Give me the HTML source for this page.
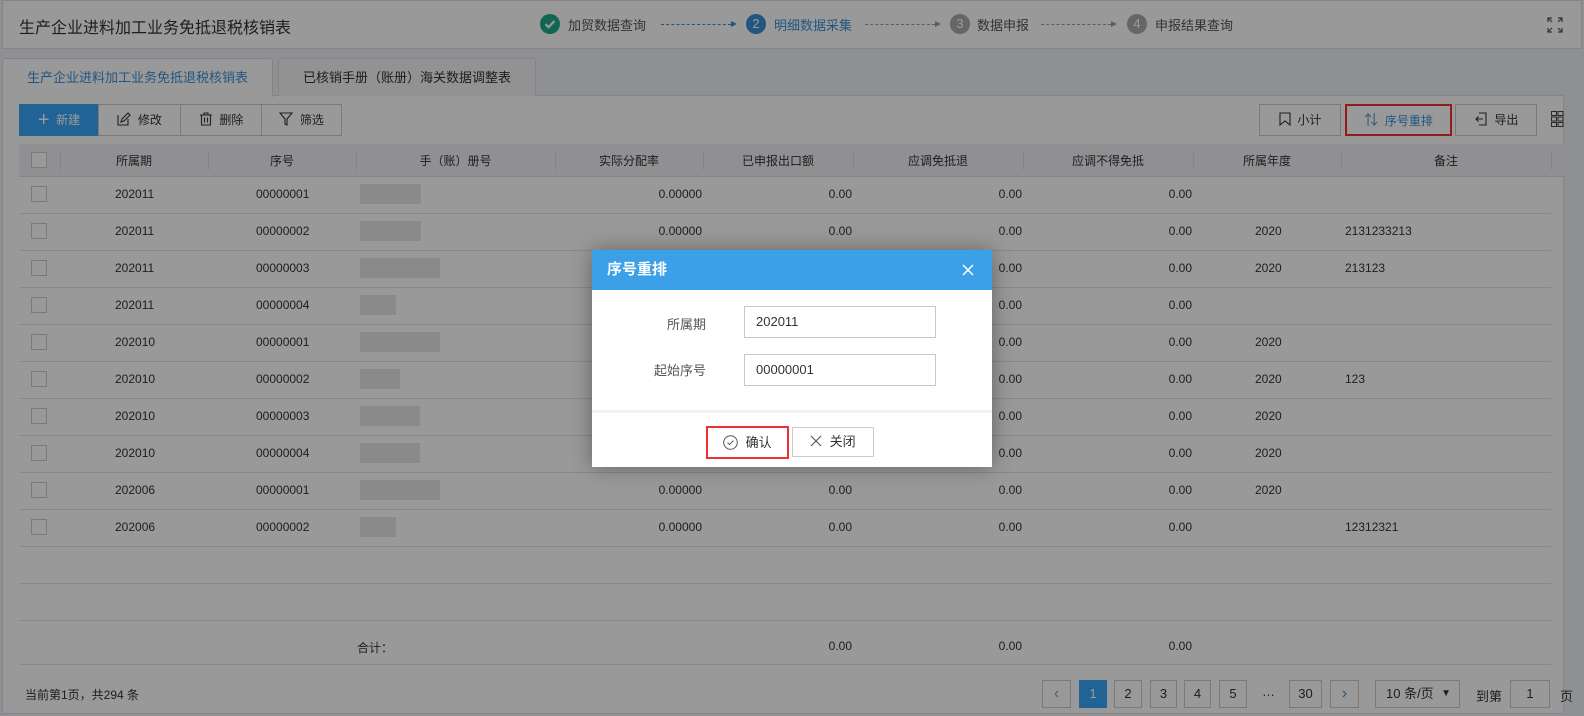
<!DOCTYPE html>
<html><head><meta charset="utf-8">
<style>
*{box-sizing:border-box;margin:0;padding:0}
body{width:1584px;height:716px;overflow:hidden;background:#eef0f6;font-family:"Liberation Sans","Noto Sans CJK SC",sans-serif;font-size:12px;color:#333;position:relative}
.abs{position:absolute}
.hdr{left:2px;top:0;width:1580px;height:49px;background:#fff;border:1px solid #ddd}
.title{left:19px;top:14px;font-size:16px;color:#333}
.step{top:15px;font-size:13px;color:#555}
.circ{top:14px;width:20px;height:20px;border-radius:50%;color:#fff;font-size:13px;text-align:center;line-height:20px}
.arrow{top:24px;height:0;border-top:1px dashed #3a8fd8}
.arrow::after{content:"";position:absolute;right:-6px;top:-4px;border-left:6px solid #3a8fd8;border-top:3.5px solid transparent;border-bottom:3.5px solid transparent}
.arrow.g{border-color:#999}.arrow.g::after{border-left-color:#999}
.tab{top:58px;height:38px;border:1px solid #ddd;border-bottom:none;border-radius:3px 3px 0 0;font-size:13px;line-height:38px;text-align:center;background:#f4f4f4;color:#333}
.panel{left:2px;top:95px;width:1562px;height:619px;background:#fff;border:1px solid #ddd}
.btn{top:104px;height:32px;border:1px solid #ccc;background:#fff;font-size:12px;line-height:30px;text-align:center;color:#333}
.th{top:144px;height:33px;background:#f0f1f5;left:19px;width:1545px;border-bottom:1px solid #ddd}
.sep{top:151px;width:1px;height:19px;background:#dcdcdc}
.hc{top:152px;font-size:12px;color:#333;text-align:center}
.row{left:19px;width:1532px;height:1px;background:#e4e4e4}
.cb{width:16px;height:16px;border:1px solid #ccc;background:#fff;left:31px}
.t{font-size:12px;color:#333;white-space:nowrap}
.r{text-align:right;width:80px}
.blur{left:360px;height:20px;background:#e6e6e6}
.pg{top:680px;height:28px;border:1px solid #ccc;background:#fff;text-align:center;line-height:26px;font-size:13px;color:#333}
.ov{left:0;top:0;width:1584px;height:716px;background:rgba(0,0,0,0.4)}
.modal{left:592px;top:250px;width:400px;height:217px;background:#fff;box-shadow:0 0 20px rgba(0,0,0,.35)}
.mh{left:0;top:0;width:400px;height:40px;background:#3ba0e8;color:#fff;font-size:15px;font-weight:bold;line-height:40px;padding-left:15px}
.inp{width:192px;height:32px;border:1px solid #c8c8c8;font-size:13px;line-height:30px;padding-left:11px;color:#333}
.lab{font-size:13px;color:#555;text-align:right;width:100px}
</style></head><body>
<div class="abs hdr"></div>
<div class="abs title">生产企业进料加工业务免抵退税核销表</div>
<div class="abs circ" style="left:540px;background:#1ea88a"><svg width="20" height="20" viewBox="0 0 20 20"><path d="M5.5 10.2l3 3 6-6.2" stroke="#fff" stroke-width="2.2" fill="none"/></svg></div>
<div class="abs step" style="left:568px">加贸数据查询</div>
<div class="abs arrow" style="left:661px;width:70px"></div>
<div class="abs circ" style="left:746px;background:#3a8fd8">2</div>
<div class="abs step" style="left:774px;color:#3a8fd8">明细数据采集</div>
<div class="abs arrow g" style="left:865px;width:70px"></div>
<div class="abs circ" style="left:950px;background:#aaa">3</div>
<div class="abs step" style="left:977px">数据申报</div>
<div class="abs arrow g" style="left:1041px;width:70px"></div>
<div class="abs circ" style="left:1127px;background:#aaa">4</div>
<div class="abs step" style="left:1155px">申报结果查询</div>
<svg class="abs" style="left:1547px;top:17px" width="16" height="16" viewBox="0 0 16 16" fill="none" stroke="#555" stroke-width="1.2"><path d="M1 5V1h4M1 1l4 4M11 1h4v4M15 1l-4 4M1 11v4h4M1 15l4-4M15 11v4h-4M15 15l-4-4"/></svg>

<div class="abs panel"></div>
<div class="abs tab" style="left:2px;width:271px;background:#fff;color:#3a8fd8;height:39px">生产企业进料加工业务免抵退税核销表</div>
<div class="abs tab" style="left:278px;width:258px">已核销手册（账册）海关数据调整表</div>

<div class="abs btn" style="left:19px;width:80px;background:#3aa6f8;border-color:#3aa6f8;color:#fff"><span style="font-size:20px;vertical-align:-2px;font-weight:300">+</span>&nbsp;&nbsp;新建</div>
<div class="abs btn" style="left:98px;width:83px"><svg width="14" height="14" viewBox="0 0 14 14" style="vertical-align:-2px" fill="none" stroke="#333" stroke-width="1.1"><path d="M1 3v10h10V7M4 10l1-3 6-6 2 2-6 6z"/></svg>&nbsp;&nbsp;修改</div>
<div class="abs btn" style="left:180px;width:82px"><svg width="14" height="14" viewBox="0 0 14 14" style="vertical-align:-2px" fill="none" stroke="#333" stroke-width="1.1"><path d="M1 3h12M5 3V1h4v2M2.5 3v10h9V3M5.5 5.5v5M8.5 5.5v5"/></svg>&nbsp;&nbsp;删除</div>
<div class="abs btn" style="left:261px;width:81px"><svg width="14" height="14" viewBox="0 0 14 14" style="vertical-align:-2px" fill="none" stroke="#333" stroke-width="1.1"><path d="M1 1h12L8 7v6L6 12V7z"/></svg>&nbsp;&nbsp;筛选</div>

<div class="abs btn" style="left:1259px;width:82px"><svg width="12" height="14" viewBox="0 0 12 14" style="vertical-align:-2px" fill="none" stroke="#333" stroke-width="1.1"><path d="M1 1h10v12L6 9 1 13z"/></svg>&nbsp;&nbsp;小计</div>
<div class="abs btn" style="left:1345px;width:107px;border:2px solid #f0302f;color:#3a8fd8;line-height:28px"><span style="font-size:14px">⇅</span>&nbsp;&nbsp;序号重排</div>
<div class="abs btn" style="left:1455px;width:82px"><svg width="14" height="14" viewBox="0 0 14 14" style="vertical-align:-2px" fill="none" stroke="#333" stroke-width="1.1"><path d="M5 1h7v12H5M2 7h7M4.5 4.5L2 7l2.5 2.5"/></svg>&nbsp;&nbsp;导出</div>
<svg class="abs" style="left:1551px;top:111px" width="13" height="16" viewBox="0 0 13 16" fill="none" stroke="#444"><rect x="0.5" y="0.5" width="5" height="4"/><rect x="7" y="0.5" width="5" height="4"/><rect x="0.5" y="6" width="5" height="4"/><rect x="7" y="6" width="5" height="4"/><rect x="0.5" y="11.5" width="5" height="4"/><rect x="7" y="11.5" width="5" height="4"/></svg>

<div class="abs th"></div>
<div class="abs cb" style="top:152px"></div>
<div class="abs sep" style="left:60px"></div><div class="abs sep" style="left:208px"></div><div class="abs sep" style="left:356px"></div><div class="abs sep" style="left:555px"></div><div class="abs sep" style="left:703px"></div><div class="abs sep" style="left:853px"></div><div class="abs sep" style="left:1023px"></div><div class="abs sep" style="left:1193px"></div><div class="abs sep" style="left:1341px"></div><div class="abs sep" style="left:1551px"></div>
<div class="abs hc" style="left:60px;width:148px">所属期</div>
<div class="abs hc" style="left:208px;width:148px">序号</div>
<div class="abs hc" style="left:356px;width:199px">手（账）册号</div>
<div class="abs hc" style="left:555px;width:148px">实际分配率</div>
<div class="abs hc" style="left:703px;width:150px">已申报出口额</div>
<div class="abs hc" style="left:853px;width:170px">应调免抵退</div>
<div class="abs hc" style="left:1023px;width:170px">应调不得免抵</div>
<div class="abs hc" style="left:1193px;width:148px">所属年度</div>
<div class="abs hc" style="left:1341px;width:210px">备注</div>

<div id="rows"></div>
<script>
var d=[["202011","00000001","",""],["202011","00000002","2020","2131233213"],["202011","00000003","2020","213123"],["202011","00000004","",""],["202010","00000001","2020",""],["202010","00000002","2020","123"],["202010","00000003","2020",""],["202010","00000004","2020",""],["202006","00000001","2020",""],["202006","00000002","","12312321"]];
var bw=[61,61,80,36,80,40,60,60,80,36];
var h="";
for(var i=0;i<10;i++){var y=176+i*37,ty=y+11;
h+='<div class="abs row" style="top:'+(y+37)+'px"></div>';
h+='<div class="abs cb" style="top:'+(y+10)+'px"></div>';
h+='<div class="abs t" style="left:115px;top:'+ty+'px">'+d[i][0]+'</div>';
h+='<div class="abs t" style="left:256px;top:'+ty+'px">'+d[i][1]+'</div>';
h+='<div class="abs blur" style="top:'+(y+8)+'px;width:'+bw[i]+'px"></div>';
h+='<div class="abs t r" style="left:622px;top:'+ty+'px">0.00000</div>';
h+='<div class="abs t r" style="left:772px;top:'+ty+'px">0.00</div>';
h+='<div class="abs t r" style="left:942px;top:'+ty+'px">0.00</div>';
h+='<div class="abs t r" style="left:1112px;top:'+ty+'px">0.00</div>';
if(d[i][2])h+='<div class="abs t" style="left:1255px;top:'+ty+'px">'+d[i][2]+'</div>';
if(d[i][3])h+='<div class="abs t" style="left:1345px;top:'+ty+'px">'+d[i][3]+'</div>';}
h+='<div class="abs row" style="top:583px"></div><div class="abs row" style="top:620px"></div><div class="abs row" style="top:664px"></div>';
h+='<div class="abs t" style="left:357px;top:639px">合计：</div>';
h+='<div class="abs t r" style="left:772px;top:639px">0.00</div><div class="abs t r" style="left:942px;top:639px">0.00</div><div class="abs t r" style="left:1112px;top:639px">0.00</div>';
document.getElementById("rows").innerHTML=h;
</script>

<div class="abs t" style="left:25px;top:686px">当前第1页，共294 条</div>
<div class="abs pg" style="left:1042px;width:29px;color:#999;font-size:16px">&lsaquo;</div>
<div class="abs pg" style="left:1079px;width:28px;background:#3aa6f8;border-color:#3aa6f8;color:#fff">1</div>
<div class="abs pg" style="left:1114px;width:28px">2</div>
<div class="abs pg" style="left:1150px;width:27px">3</div>
<div class="abs pg" style="left:1184px;width:27px">4</div>
<div class="abs pg" style="left:1219px;width:28px">5</div>
<div class="abs t" style="left:1262px;top:684px;font-size:13px">…</div>
<div class="abs pg" style="left:1289px;width:33px">30</div>
<div class="abs pg" style="left:1330px;width:29px;color:#3a8fd8;font-size:16px">&rsaquo;</div>
<div class="abs pg" style="left:1375px;width:85px;text-align:left;padding-left:10px">10 条/页<span style="position:absolute;right:8px;font-size:10px">▼</span></div>
<div class="abs t" style="left:1476px;top:686px;font-size:13px">到第</div>
<div class="abs pg" style="left:1510px;width:40px">1</div>
<div class="abs t" style="left:1560px;top:686px;font-size:13px">页</div>

<div class="abs ov"></div>

<div class="abs modal">
<div class="abs mh">序号重排</div>
<svg class="abs" style="left:370px;top:14px" width="12" height="12" viewBox="0 0 12 12" stroke="#fff" stroke-width="1.5"><path d="M1 1l10 10M11 1L1 11"/></svg>
<div class="abs lab" style="left:14px;top:64px">所属期</div>
<div class="abs inp" style="left:152px;top:56px">202011</div>
<div class="abs lab" style="left:14px;top:110px">起始序号</div>
<div class="abs inp" style="left:152px;top:104px">00000001</div>
<div class="abs" style="left:0;top:160px;width:400px;height:3px;background:#f2f2f2"></div>
<div class="abs" style="left:114px;top:176px;width:83px;height:33px;border:2px solid #f0302f;font-size:13px;line-height:29px;text-align:center;color:#333"><svg width="15" height="15" viewBox="0 0 15 15" style="vertical-align:-3px" fill="none" stroke="#555" stroke-width="1"><circle cx="7.5" cy="7.5" r="6.8"/><path d="M4.5 7.6l2 2 4-4"/></svg>&nbsp;&nbsp;确认</div>
<div class="abs" style="left:200px;top:177px;width:82px;height:30px;border:1px solid #ccc;font-size:13px;line-height:28px;text-align:center;color:#333"><svg width="12" height="12" viewBox="0 0 12 12" style="vertical-align:-1px" stroke="#555" stroke-width="1.1"><path d="M1 1l10 10M11 1L1 11"/></svg>&nbsp;&nbsp;关闭</div>
</div>
</body></html>
